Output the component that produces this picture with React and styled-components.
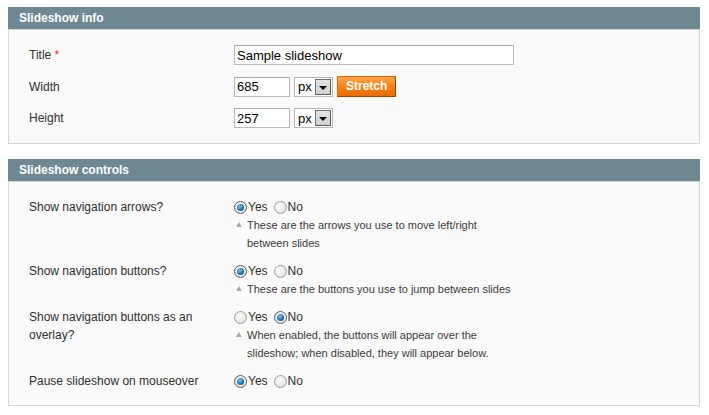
import React from 'react';
import styled, { createGlobalStyle } from 'styled-components';

const GlobalStyle = createGlobalStyle`
  body {
    margin: 7px 0 0 8px;
    background: #fff;
    font-family: "Liberation Sans", Arial, sans-serif;
    font-size: 12px;
    color: #2f2f2f;
  }
`;

const Page = styled.div`
  width: 692px;
  display: flex;
  flex-direction: column;
  gap: 15px;
`;

const Section = styled.section`
  display: flex;
  flex-direction: column;
`;

const Head = styled.div`
  background: #6f8992;
  height: 22px;
  padding: 2px 11px;
  box-sizing: border-box;
  h4 {
    margin: 0;
    color: #fff;
    font-size: 12px;
    font-weight: bold;
    line-height: 18px;
  }
`;

const Fieldset = styled.div`
  background: #fafafa;
  border: 1px solid #d6d6d6;
  padding: ${(p) => p.$pad};
  display: flex;
  flex-direction: column;
  gap: ${(p) => p.$gap}px;
`;

const Row = styled.div`
  display: grid;
  grid-template-columns: 225px 1fr;
  align-items: ${(p) => (p.$center ? 'center' : 'start')};
`;

const Label = styled.div`
  padding-left: 20px;
  max-width: 180px;
  line-height: 18px;
  color: #2f2f2f;
  span {
    color: #eb340a;
  }
`;

const Value = styled.div`
  display: flex;
  flex-direction: column;
`;

const Inline = styled.div`
  display: flex;
  align-items: center;
  gap: 4px;
`;

const TextInput = styled.input`
  box-sizing: border-box;
  width: ${(p) => p.$w}px;
  height: 20px;
  border: 1px solid #b9b9b9;
  border-top-color: #aaaaaa;
  background: #fff;
  font-family: "Liberation Sans", Arial, sans-serif;
  font-size: 13px;
  color: #000;
  padding: 0 2px;
  margin: 0;
  outline: none;
`;

const Select = styled.div`
  box-sizing: border-box;
  width: 39px;
  height: 20px;
  border: 1px solid #b9b9b9;
  background: #fff;
  display: flex;
  align-items: center;
  justify-content: space-between;
  padding: 1px 1px 1px 3px;
  font-size: 13px;
  color: #000;
`;

const DropBtn = styled.span`
  box-sizing: border-box;
  width: 16px;
  height: 16px;
  border: 1px solid #6f6f6f;
  border-right-color: #5a5a5a;
  border-bottom-color: #5a5a5a;
  background: linear-gradient(#e6e6e6, #cfcfcf);
  display: flex;
  align-items: center;
  justify-content: center;
  &::after {
    content: '';
    margin-top: 2px;
    border-left: 4px solid transparent;
    border-right: 4px solid transparent;
    border-top: 4px solid #000;
  }
`;

const Button = styled.button`
  box-sizing: border-box;
  height: 21px;
  padding: 0 8px 1px;
  border: 1px solid;
  border-color: #ed6502 #a04300 #a04300 #ed6502;
  background: linear-gradient(#ffa54a, #f57d12 60%, #e86a05);
  color: #fff;
  font-family: "Liberation Sans", Arial, sans-serif;
  font-size: 12px;
  font-weight: bold;
  cursor: pointer;
`;

const Radios = styled.div`
  display: flex;
  align-items: center;
  height: 18px;
  gap: 6px;
`;

const RadioLabel = styled.label`
  display: flex;
  align-items: center;
  gap: 1px;
  font-size: 12px;
  color: #2f2f2f;
`;

const Radio = styled.span`
  box-sizing: border-box;
  width: 13px;
  height: 13px;
  border-radius: 50%;
  border: 1px solid ${(p) => (p.$on ? '#5b5b5b' : '#9c9c9c')};
  background: radial-gradient(circle at 40% 35%, #ffffff, #d8d8d8);
  display: flex;
  align-items: center;
  justify-content: center;
  &::after {
    content: '';
    display: ${(p) => (p.$on ? 'block' : 'none')};
    width: 7px;
    height: 7px;
    border-radius: 50%;
    background: radial-gradient(circle at 40% 35%, #7fc4f0, #1f6ba8 60%, #174f80);
  }
`;

const Note = styled.div`
  position: relative;
  padding-left: 13px;
  font-size: 11px;
  line-height: 18px;
  color: #3a3a3a;
  max-width: 267px;
  &::before {
    content: '';
    position: absolute;
    left: 2px;
    top: 6px;
    border-left: 3px solid transparent;
    border-right: 3px solid transparent;
    border-bottom: 5px solid #a3adb3;
  }
`;

const YesNo = ({ yes }) => (
  <Radios>
    <RadioLabel>
      <Radio $on={yes} />
      Yes
    </RadioLabel>
    <RadioLabel>
      <Radio $on={!yes} />
      No
    </RadioLabel>
  </Radios>
);

const controls = [
  {
    label: 'Show navigation arrows?',
    yes: true,
    note: 'These are the arrows you use to move left/right between slides',
  },
  {
    label: 'Show navigation buttons?',
    yes: true,
    note: 'These are the buttons you use to jump between slides',
  },
  {
    label: 'Show navigation buttons as an overlay?',
    yes: false,
    note: 'When enabled, the buttons will appear over the slideshow; when disabled, they will appear below.',
  },
  { label: 'Pause slideshow on mouseover', yes: true },
];

export default function App() {
  return (
    <>
      <GlobalStyle />
      <Page>
        <Section>
          <Head>
            <h4>Slideshow info</h4>
          </Head>
          <Fieldset $pad="15px 0 15px" $gap={11}>
            <Row $center>
              <Label>
                Title <span>*</span>
              </Label>
              <TextInput $w={280} defaultValue="Sample slideshow" />
            </Row>
            <Row $center>
              <Label>Width</Label>
              <Inline>
                <TextInput $w={56} defaultValue="685" />
                <Select>
                  px
                  <DropBtn />
                </Select>
                <Button>Stretch</Button>
              </Inline>
            </Row>
            <Row $center>
              <Label>Height</Label>
              <Inline>
                <TextInput $w={56} defaultValue="257" />
                <Select>
                  px
                  <DropBtn />
                </Select>
              </Inline>
            </Row>
          </Fieldset>
        </Section>
        <Section>
          <Head>
            <h4>Slideshow controls</h4>
          </Head>
          <Fieldset $pad="16px 0 15px" $gap={10}>
            {controls.map((c) => (
              <Row key={c.label}>
                <Label>{c.label}</Label>
                <Value>
                  <YesNo yes={c.yes} />
                  {c.note && <Note>{c.note}</Note>}
                </Value>
              </Row>
            ))}
          </Fieldset>
        </Section>
      </Page>
    </>
  );
}
